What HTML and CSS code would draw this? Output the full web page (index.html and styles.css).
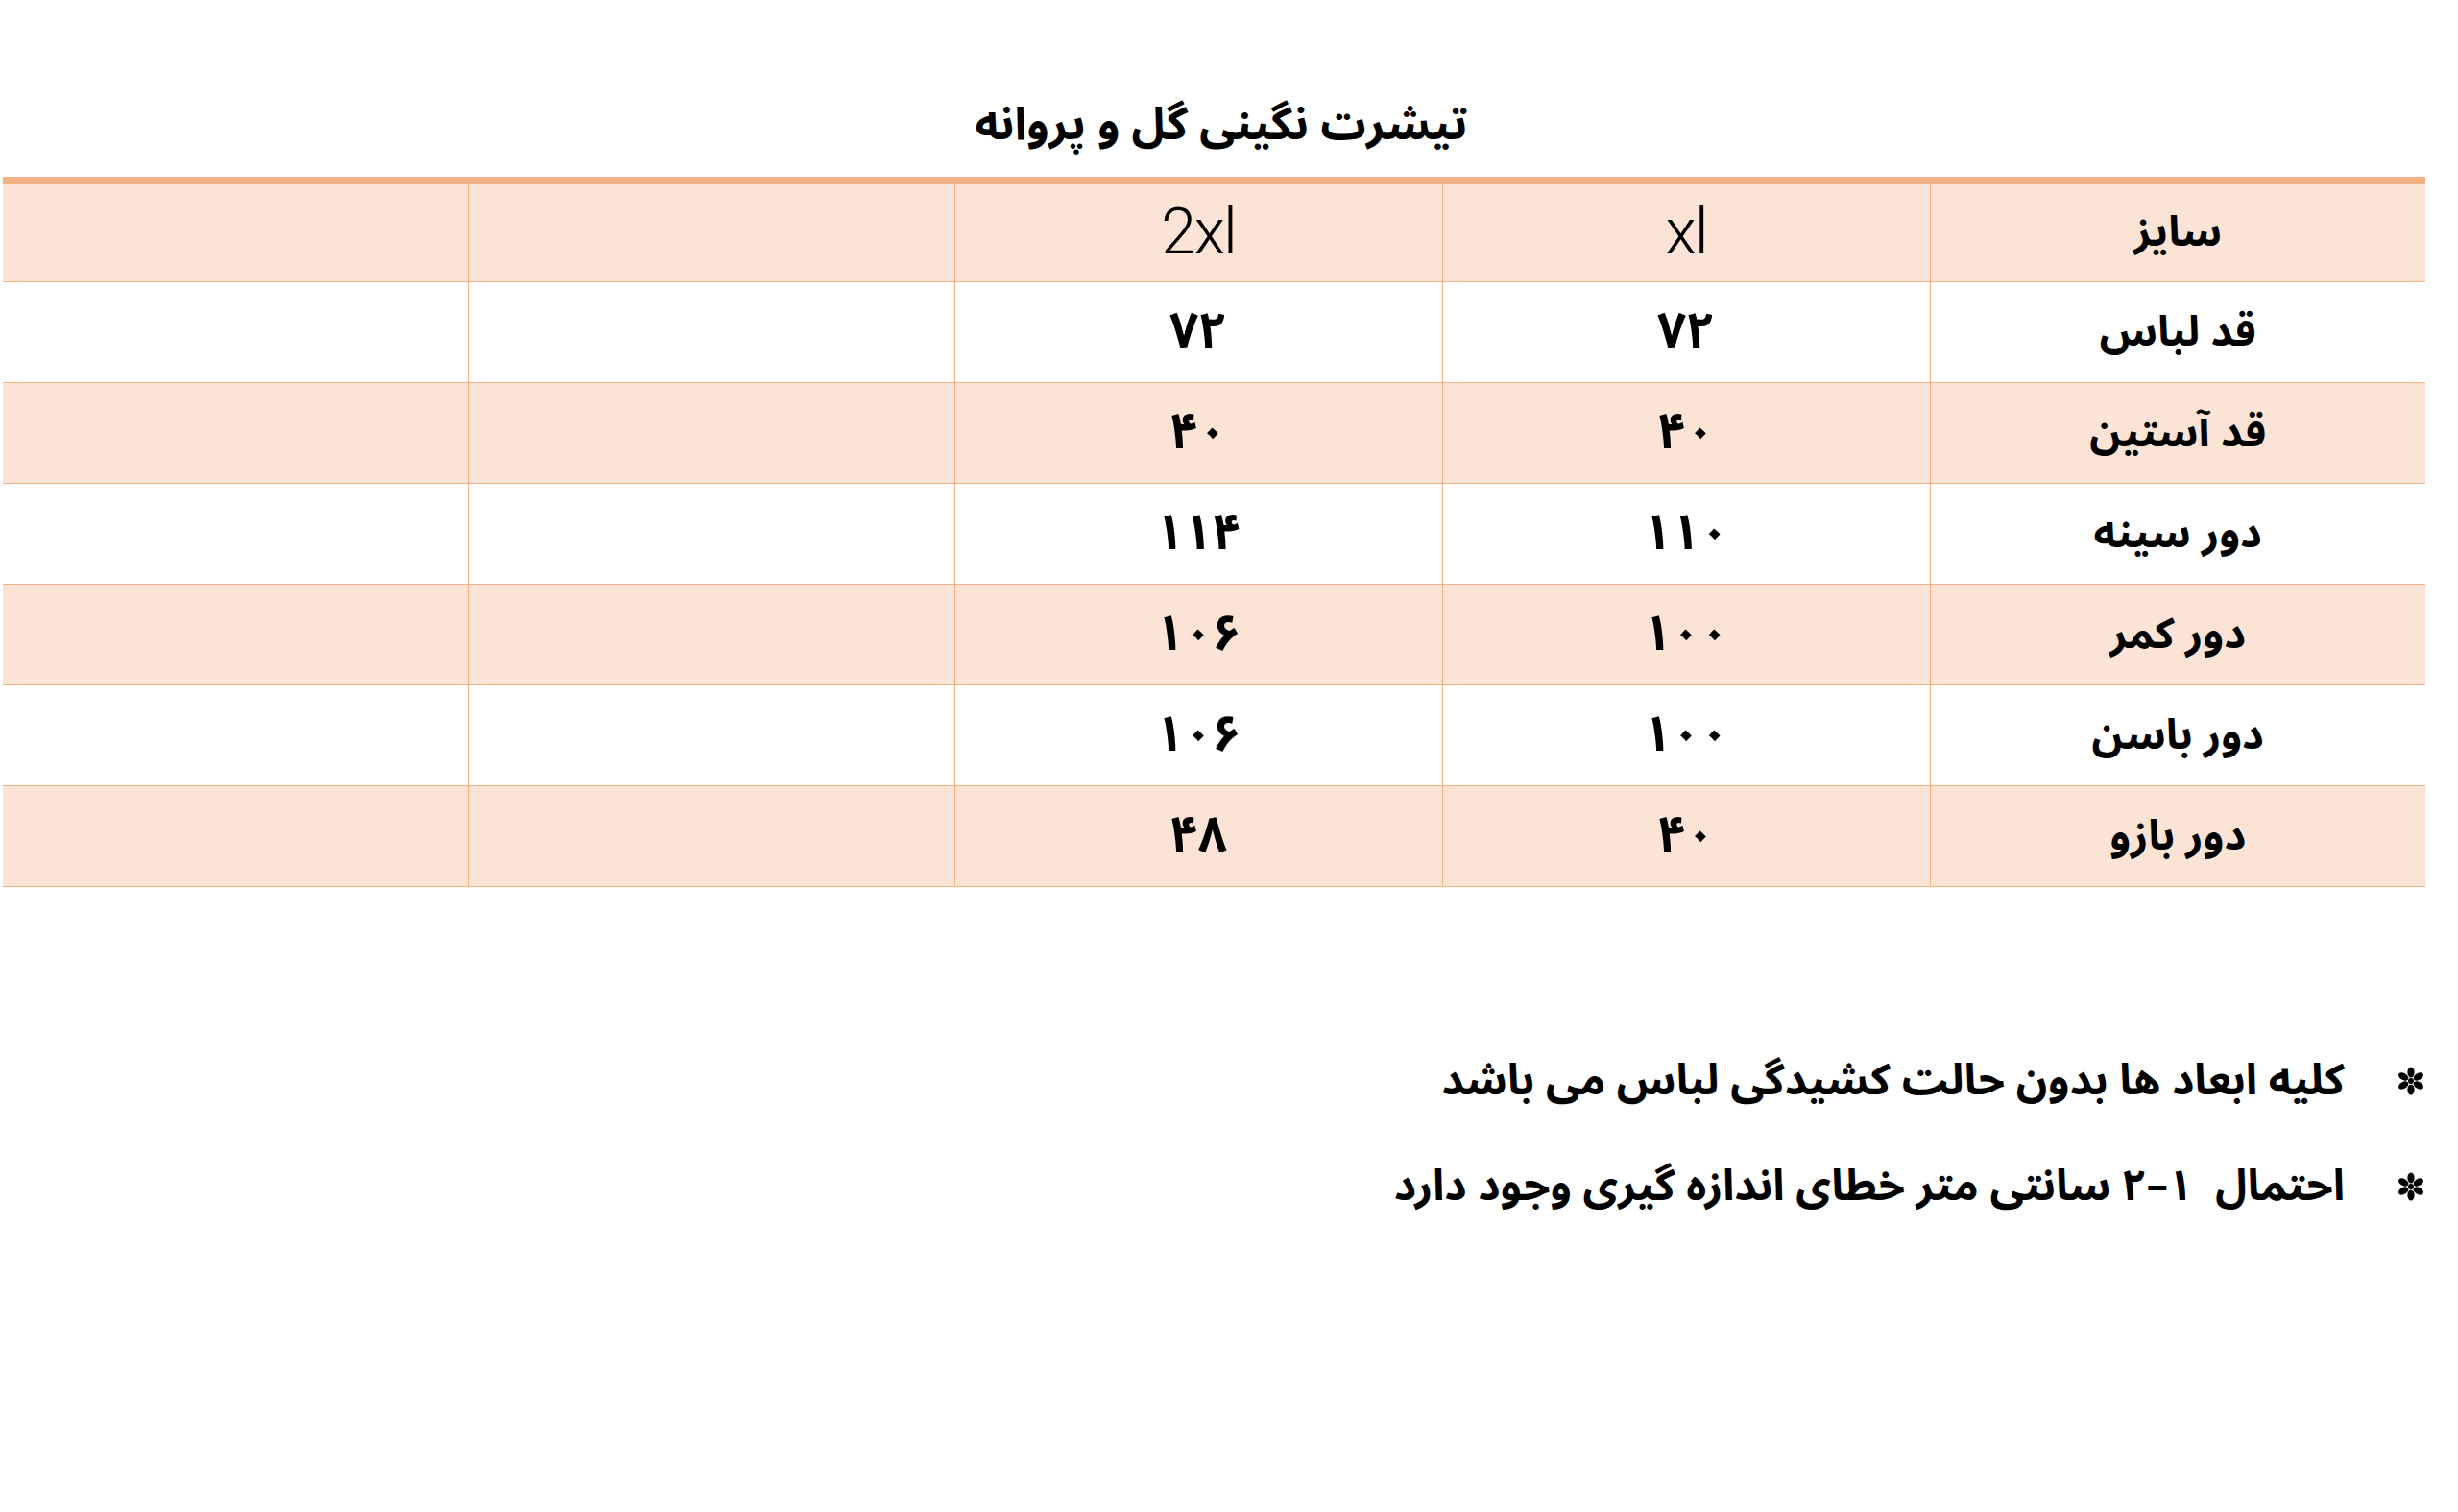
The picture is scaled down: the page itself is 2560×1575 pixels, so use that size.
FILE: index.html
```html
<!DOCTYPE html>
<html lang="fa" dir="rtl">
<head>
<meta charset="utf-8">
<title>تیشرت نگینی گل و پروانه</title>
<link rel="stylesheet" href="styles.css">
</head>
<body>
<div class="page">
  <h1 class="title">تیشرت نگینی گل و پروانه</h1>
  <table class="size-table">
    <colgroup>
      <col class="c1"><col class="c2"><col class="c3"><col class="c4"><col class="c5">
    </colgroup>
    <tbody>
      <tr class="shade">
        <td class="label">سایز</td>
        <td class="latin">xl</td>
        <td class="latin">2xl</td>
        <td></td>
        <td></td>
      </tr>
      <tr>
        <td class="label">قد لباس</td>
        <td class="num">۷۲</td>
        <td class="num">۷۲</td>
        <td></td>
        <td></td>
      </tr>
      <tr class="shade">
        <td class="label">قد آستین</td>
        <td class="num">۴۰</td>
        <td class="num">۴۰</td>
        <td></td>
        <td></td>
      </tr>
      <tr>
        <td class="label">دور سینه</td>
        <td class="num">۱۱۰</td>
        <td class="num">۱۱۴</td>
        <td></td>
        <td></td>
      </tr>
      <tr class="shade">
        <td class="label">دور کمر</td>
        <td class="num">۱۰۰</td>
        <td class="num">۱۰۶</td>
        <td></td>
        <td></td>
      </tr>
      <tr>
        <td class="label">دور باسن</td>
        <td class="num">۱۰۰</td>
        <td class="num">۱۰۶</td>
        <td></td>
        <td></td>
      </tr>
      <tr class="shade">
        <td class="label">دور بازو</td>
        <td class="num">۴۰</td>
        <td class="num">۴۸</td>
        <td></td>
        <td></td>
      </tr>
    </tbody>
  </table>
  <ul class="notes">
    <li class="note">
      <svg class="bullet" viewBox="0 0 30 30" aria-hidden="true">
        <g fill="#000" transform="translate(15 15)">
          <ellipse cx="0" cy="-9" rx="3.6" ry="5.6"/>
          <ellipse cx="0" cy="-9" rx="3.6" ry="5.6" transform="rotate(60)"/>
          <ellipse cx="0" cy="-9" rx="3.6" ry="5.6" transform="rotate(120)"/>
          <ellipse cx="0" cy="-9" rx="3.6" ry="5.6" transform="rotate(180)"/>
          <ellipse cx="0" cy="-9" rx="3.6" ry="5.6" transform="rotate(240)"/>
          <ellipse cx="0" cy="-9" rx="3.6" ry="5.6" transform="rotate(300)"/>
          <circle cx="0" cy="0" r="3"/>
        </g>
      </svg>
      <span class="note-text">کلیه ابعاد ها بدون حالت کشیدگی لباس می باشد</span>
    </li>
    <li class="note">
      <svg class="bullet" viewBox="0 0 30 30" aria-hidden="true">
        <g fill="#000" transform="translate(15 15)">
          <ellipse cx="0" cy="-9" rx="3.6" ry="5.6"/>
          <ellipse cx="0" cy="-9" rx="3.6" ry="5.6" transform="rotate(60)"/>
          <ellipse cx="0" cy="-9" rx="3.6" ry="5.6" transform="rotate(120)"/>
          <ellipse cx="0" cy="-9" rx="3.6" ry="5.6" transform="rotate(180)"/>
          <ellipse cx="0" cy="-9" rx="3.6" ry="5.6" transform="rotate(240)"/>
          <ellipse cx="0" cy="-9" rx="3.6" ry="5.6" transform="rotate(300)"/>
          <circle cx="0" cy="0" r="3"/>
        </g>
      </svg>
      <span class="note-text">احتمال&nbsp; ۱–۲ سانتی متر خطای اندازه گیری وجود دارد</span>
    </li>
  </ul>
</div>
</body>
</html>
```
FILE: styles.css
```css
html, body {
  margin: 0;
  padding: 0;
  background: #ffffff;
}

body {
  font-family: "Noto Sans Arabic", "Vazirmatn", "DejaVu Sans", sans-serif;
  color: #000;
}

.page {
  width: 2560px;
  display: flex;
  flex-direction: column;
}

.title {
  margin: 0;
  padding-top: 95px;
  height: 89px;
  box-sizing: content-box;
  font-size: 47px;
  font-weight: 700;
  line-height: 70px;
  text-align: center;
  padding-right: 16px;
}

.size-table {
  direction: rtl;
  margin: 0 34px 0 3px;
  width: 2523px;
  border-collapse: collapse;
  table-layout: fixed;
  border-top: 8px solid #f4b183;
}

.c1 { width: 516px; }
.c2 { width: 508px; }
.c3 { width: 508px; }
.c4 { width: 507px; }
.c5 { width: 484px; }

.size-table td {
  height: 105px;
  padding: 0;
  line-height: 60px;
  text-align: center;
  vertical-align: middle;
  border-bottom: 1px solid #f4b183;
  border-left: 1px solid #f4b183;
  box-sizing: border-box;
}

.size-table td:last-child {
  border-left: none;
}

.shade td {
  background: #fbe4d5;
}

.label {
  font-size: 44px;
  font-weight: 700;
}

.num {
  font-size: 52px;
  font-weight: 700;
}

.latin {
  font-family: "Roboto", "Open Sans", sans-serif;
  font-weight: 300;
  font-size: 66px;
  letter-spacing: -2px;
}

.notes {
  list-style: none;
  margin: 0;
  padding: 167px 34px 0 0;
  display: flex;
  flex-direction: column;
  gap: 40px;
}

.note {
  display: flex;
  align-items: center;
  gap: 54px;
  height: 70px;
}

.bullet {
  width: 30px;
  height: 30px;
  flex: none;
}

.note-text {
  font-size: 45px;
  font-weight: 700;
}
```
